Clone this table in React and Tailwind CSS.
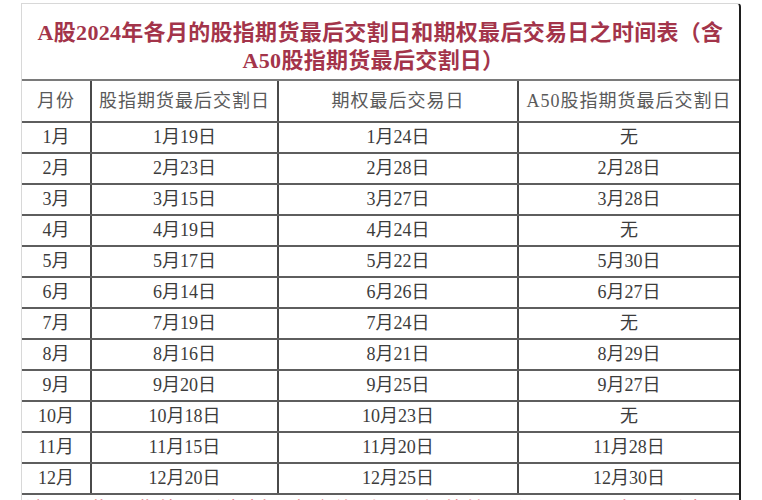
import React from "react";

const rows = [
  ["1月", "1月19日", "1月24日", "无"],
  ["2月", "2月23日", "2月28日", "2月28日"],
  ["3月", "3月15日", "3月27日", "3月28日"],
  ["4月", "4月19日", "4月24日", "无"],
  ["5月", "5月17日", "5月22日", "5月30日"],
  ["6月", "6月14日", "6月26日", "6月27日"],
  ["7月", "7月19日", "7月24日", "无"],
  ["8月", "8月16日", "8月21日", "8月29日"],
  ["9月", "9月20日", "9月25日", "9月27日"],
  ["10月", "10月18日", "10月23日", "无"],
  ["11月", "11月15日", "11月20日", "11月28日"],
  ["12月", "12月20日", "12月25日", "12月30日"],
];

const font = { fontFamily: '"Liberation Serif", "Noto Sans CJK SC", serif' };

function Row({ cells, header }) {
  return (
    <div
      className={`flex border-b-2 border-[#5e5e5e] ${header ? "h-[42px] text-[#5a5a5a] tracking-[1px]" : "h-[31px] text-[#3c3c3c]"} text-[18px]`}
    >
      <div className="w-[70px] shrink-0 border-r-2 border-[#4a4a4a] flex items-center justify-center">
        {cells[0]}
      </div>
      <div className="w-[187px] shrink-0 border-r-2 border-[#4a4a4a] flex items-center justify-center">
        {cells[1]}
      </div>
      <div className="w-[240px] shrink-0 border-r-2 border-[#4a4a4a] flex items-center justify-center">
        {cells[2]}
      </div>
      <div className="flex-1 flex items-center justify-center">{cells[3]}</div>
    </div>
  );
}

export default function App() {
  return (
    <div className="w-[762px] h-[500px] bg-white overflow-hidden" style={font}>
      <div className="ml-[21px] mt-[3px] w-[720px] bg-white border-t border-l border-[#d8d8d8] border-r-2 border-r-[#1e1e1e] rounded-tr-[4px]">
        <div className="h-[77px] border-b-2 border-[#7a7a7a] pt-[15px] text-center text-[22px] leading-[28px] font-bold text-[#a3344a] tracking-[0.3px]">
          <div className="whitespace-nowrap">A股2024年各月的股指期货最后交割日和期权最后交易日之时间表（含</div>
          <div className="whitespace-nowrap pr-[14px]">A50股指期货最后交割日）</div>
        </div>
        <Row header cells={["月份", "股指期货最后交割日", "期权最后交易日", "A50股指期货最后交割日"]} />
        {rows.map((r) => (
          <Row key={r[0]} cells={r} />
        ))}
        <div className="h-[40px] pl-[3px] pt-[2px] text-[22px] leading-[28px] text-[#d4313a] whitespace-nowrap overflow-hidden">
          注：股指期货的最后交割日为合约到期月份的第三个周五，期权最后交易日同股指期货
        </div>
      </div>
    </div>
  );
}
